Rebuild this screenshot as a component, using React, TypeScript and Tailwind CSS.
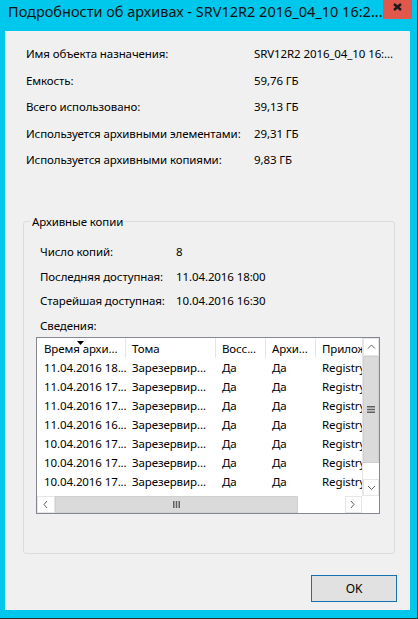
import React from 'react';

const summary = [
  ['Имя объекта назначения:', 'SRV12R2 2016_04_10 16:...'],
  ['Емкость:', '59,76 ГБ'],
  ['Всего использовано:', '39,13 ГБ'],
  ['Используется архивными элементами:', '29,31 ГБ'],
  ['Используется архивными копиями:', '9,83 ГБ'],
];

const copies = [
  ['Число копий:', '8'],
  ['Последняя доступная:', '11.04.2016 18:00'],
  ['Старейшая доступная:', '10.04.2016 16:30'],
];

const rows = [
  '11.04.2016 18...',
  '11.04.2016 17...',
  '11.04.2016 17...',
  '11.04.2016 16...',
  '10.04.2016 17...',
  '10.04.2016 17...',
  '10.04.2016 17...',
];

function Chevron({ dir }: { dir: 'left' | 'right' | 'up' | 'down' }) {
  const pts = {
    left: '5,1 2,4.5 5,8',
    right: '2,1 5,4.5 2,8',
    up: '1,5.5 4.5,2 8,5.5',
    down: '1,3 4.5,6.5 8,3',
  }[dir];
  return (
    <svg width="9" height="9" viewBox="0 0 9 9">
      <polyline points={pts} fill="none" stroke="#606060" strokeWidth="1" />
    </svg>
  );
}

function ListView() {
  return (
    <div className="ml-[12px] w-[344px] h-[177px] border border-[#828790] bg-white flex">
      {/* columns + horizontal scrollbar */}
      <div className="w-[325px] flex flex-col">
        <div className="h-[158px] overflow-hidden">
          <div className="h-[20px] flex whitespace-nowrap">
            <div className="relative w-[89px] pl-[7px] pt-[1px] leading-[20px] border-r border-[#e5e5e5]">
              Время архи...
              <svg className="absolute left-[40px] top-[3px]" width="7" height="4" viewBox="0 0 7 4">
                <polygon points="0,0 7,0 3.5,4" fill="#000" />
              </svg>
            </div>
            <div className="w-[90px] pl-[6px] pt-[1px] leading-[20px] border-r border-[#e5e5e5]">Тома</div>
            <div className="w-[50px] pl-[6px] pt-[1px] leading-[20px] border-r border-[#e5e5e5]">Восс...</div>
            <div className="w-[50px] pl-[6px] pt-[1px] leading-[20px] border-r border-[#e5e5e5]">Архи...</div>
            <div className="flex-1 pl-[6px] pt-[1px] leading-[20px] overflow-hidden">Приложения</div>
          </div>
          {rows.map((r, i) => (
            <div key={i} className="h-[19px] leading-[19px] flex whitespace-nowrap">
              <div className="w-[89px] pl-[7px]">{r}</div>
              <div className="w-[90px] pl-[6px]">Зарезервир...</div>
              <div className="w-[50px] pl-[6px]">Да</div>
              <div className="w-[50px] pl-[6px]">Да</div>
              <div className="flex-1 pl-[6px] overflow-hidden">Registry</div>
            </div>
          ))}
        </div>
        <div className="h-[17px] flex">
          <div className="w-[18px] flex items-center justify-center border border-[#e6e6e6]">
            <Chevron dir="left" />
          </div>
          <div className="w-[243px] bg-[#dadada] border border-[#d0d0d0] flex items-center justify-center">
            <svg width="7" height="7" viewBox="0 0 7 7">
              <rect x="0" y="0" width="1.5" height="7" fill="#606060" />
              <rect x="2.75" y="0" width="1.5" height="7" fill="#606060" />
              <rect x="5.5" y="0" width="1.5" height="7" fill="#606060" />
            </svg>
          </div>
          <div className="flex-1" />
          <div className="w-[17px] flex items-center justify-center border border-[#e6e6e6]">
            <Chevron dir="right" />
          </div>
        </div>
      </div>
      {/* vertical scrollbar */}
      <div className="w-[17px] flex flex-col">
        <div className="h-[158px] flex flex-col border-l border-[#e6e6e6]">
          <div className="h-[18px] flex items-center justify-center border border-[#e6e6e6]">
            <Chevron dir="up" />
          </div>
          <div className="h-[107px] bg-[#dadada] border border-[#d0d0d0] flex items-center justify-center">
            <svg width="8" height="7" viewBox="0 0 8 7">
              <rect x="0" y="0" width="8" height="1.5" fill="#606060" />
              <rect x="0" y="2.75" width="8" height="1.5" fill="#606060" />
              <rect x="0" y="5.5" width="8" height="1.5" fill="#606060" />
            </svg>
          </div>
          <div className="flex-1" />
          <div className="h-[17px] flex items-center justify-center border border-[#e6e6e6]">
            <Chevron dir="down" />
          </div>
        </div>
        <div className="flex-1 bg-white" />
      </div>
    </div>
  );
}

export default function App() {
  return (
    <div className="w-[418px] h-[619px] bg-[#00c8ec] border-r border-b border-[#2e2e2e] flex flex-col font-['Noto_Sans',sans-serif] text-[11.5px] tracking-[-0.1px] text-black">
      {/* title bar */}
      <div className="h-[31px] flex items-start">
        <div className="pl-[8px] pt-[1px] text-[14.5px] tracking-normal leading-[20px] whitespace-nowrap text-[#111]">
          Подробности об архивах - SRV12R2 2016_04_10 16:2...
        </div>
        <div className="ml-auto mr-[5px] w-[34px] h-[19px] bg-[#e0574b] flex justify-center pt-[3px]">
          <svg width="9" height="8" viewBox="0 0 9 8">
            <path d="M1 1 L8 7 M8 1 L1 7" stroke="#1a1a1a" strokeWidth="2.4" />
          </svg>
        </div>
      </div>

      {/* client area */}
      <div className="ml-[5px] w-[405px] h-[579px] bg-[#f0f0f0] flex flex-col">
        <div className="mt-[10px] pl-[21px]">
          {summary.map(([k, v]) => (
            <div key={k} className="h-[26.5px] leading-[26.5px] flex whitespace-nowrap">
              <div className="w-[228px]">{k}</div>
              <div>{v}</div>
            </div>
          ))}
        </div>

        <fieldset className="mt-[40px] ml-[18px] w-[372px] h-[340px] border border-[#dcdcdc] rounded-[3px]">
          <legend className="ml-[6px] px-[2px] leading-[16px]">Архивные копии</legend>
          <div className="mt-[10.5px] pl-[16px]">
            {copies.map(([k, v]) => (
              <div key={k} className="h-[24.5px] leading-[24.5px] flex whitespace-nowrap">
                <div className="w-[136px]">{k}</div>
                <div>{v}</div>
              </div>
            ))}
            <div className="h-[23.5px] leading-[24.5px]">Сведения:</div>
          </div>
          <ListView />
        </fieldset>

        <button className="mt-auto mb-[8px] mr-[13px] self-end w-[86px] h-[27px] border border-[#1470b0] bg-[#e1e1e1] text-[12px]">
          OK
        </button>
      </div>
    </div>
  );
}
